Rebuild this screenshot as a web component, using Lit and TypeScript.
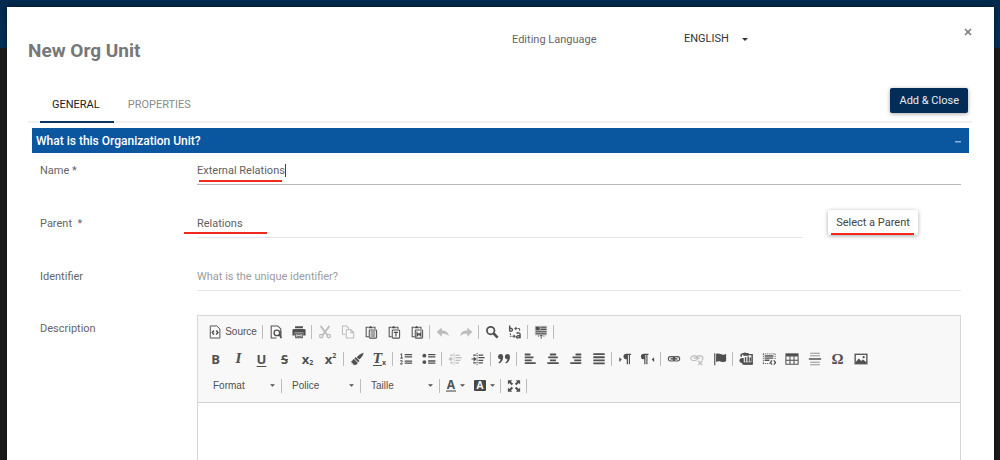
import { LitElement, html, css, svg, nothing, TemplateResult } from "lit";
import { customElement, property } from "lit/decorators.js";
import { classMap } from "lit/directives/class-map.js";

type Tool = { id: string; label: string; off?: boolean } | "|";

const t = (id: string, label: string, off = false): Tool => ({ id, label, off });

const clipboard = svg`<path d="M4.500 2.500h-2v11h3M10.500 2.500h2v2" fill="none" stroke="currentColor" stroke-width="1.200"/>
  <path d="M5 3.800V2h1.500a1 1 0 0 1 2 0H10v1.800z"/>
  <rect x="6" y="5.600" width="8.400" height="9.400" rx="1" fill="none" stroke="currentColor" stroke-width="1.200"/>`;

const ICONS: Record<string, TemplateResult> = {
  source: svg`<path d="M2.600 1.100h7.400l3.600 3.400v10.400H2.600z" fill="none" stroke="currentColor" stroke-width="1.100"/>
    <path d="M6.800 6.300 4.900 8.600 6.800 10.900M9.400 6.300l1.900 2.300-1.900 2.300" fill="none" stroke="currentColor" stroke-width="1.700"/>`,
  preview: svg`<path d="M13.500 6V4.500L10 1.100H2.500v13.800h6" fill="none" stroke="currentColor" stroke-width="1.200"/>
    <circle cx="9" cy="9" r="3.200" fill="none" stroke="currentColor" stroke-width="1.500"/>
    <path d="m11.200 11.200 3.300 3.500M13.500 6v9" fill="none" stroke="currentColor" stroke-width="1.600"/>`,
  print: svg`<path d="M3.500 1.500h9v2.300h-9zM2 4.600h12a1.500 1.500 0 0 1 1.500 1.500V12h-2.700V8.500H3.200V12H.5V6.100A1.500 1.500 0 0 1 2 4.600z"/>
    <path d="M4.300 9.400h7.400v5.200H4.300z" fill="none" stroke="currentColor" stroke-width="1.300"/><path d="M5.500 10.500h5v1h-5zM5.500 12.400h5v1h-5z"/>`,
  cut: svg`<path d="M3 1.200 11 12M13 1.200 5 12" fill="none" stroke="currentColor" stroke-width="2.200"/>
    <circle cx="3.700" cy="12.700" r="1.900" fill="none" stroke="currentColor" stroke-width="1.500"/><circle cx="12.300" cy="12.700" r="1.900" fill="none" stroke="currentColor" stroke-width="1.500"/>`,
  copy: svg`<path d="M5 10.500H1.700V1.200h4.600l2.500 2.500v1.500M6 5.500h5.500l3 3v6.300H6zM11.300 5.500v3.200h3.200" fill="none" stroke="currentColor" stroke-width="1.200"/>`,
  paste: svg`${clipboard}<path d="M7.500 7.400h5.400v1.200H7.500zM7.500 9.700h5.400v1.200H7.500zM7.500 12h5.400v1.200H7.500z"/>`,
  pastetext: svg`${clipboard}<path d="M7.800 8.300h4.800M10.200 8.300v4.800" fill="none" stroke="currentColor" stroke-width="1.400"/>`,
  pasteword: svg`${clipboard}<path d="M8 7.500v5.300l2.200-2.300 2.200 2.300V7.500M8 10.200h4.400" fill="none" stroke="currentColor" stroke-width="1.300"/>`,
  undo: svg`<path d="M6.500 2.800v3.500c4.500 0 7.500 1.500 8.200 6.700-2-2.500-4.300-3-8.200-2.900v3.300L.8 8z"/>`,
  redo: svg`<path d="M9.500 2.800v3.500c-4.500 0-7.500 1.500-8.200 6.700 2-2.500 4.300-3 8.200-2.900v3.300L15.200 8z"/>`,
  find: svg`<circle cx="6.500" cy="6.300" r="4.300" fill="none" stroke="currentColor" stroke-width="2"/><path d="m9.800 9.600 4.600 4.800" fill="none" stroke="currentColor" stroke-width="3"/>`,
  replace: svg`<path d="M1.900.5v7M1.900 4.200c3-2 4.500 2.600 1.600 2.900-.8 0-1.600-.5-1.600-1.200" fill="none" stroke="currentColor" stroke-width="1.600"/>
    <path d="M9.800 9.700c1.500-1.500 4-.8 4 .8v4.600M13.800 12c-5-.2-5 2.900-2.700 2.700 1.200 0 2.500-.7 2.700-1.500" fill="none" stroke="currentColor" stroke-width="1.600"/>
    <path d="M2.700 9.500v3.300h4.500M13.300 6.700V4H9" fill="none" stroke="currentColor" stroke-width="1.200" stroke-dasharray="2 .7"/><path d="m6.500 10.500 2.500 2.300-2.500 2.300zM9.500 1.700 7 4l2.500 2.300z"/>`,
  selectall: svg`<path d="M1 1h14v10.800H1z" fill="currentColor" opacity=".35"/><path d="M2 2h4.500v4H2zM7.500 2h6.500v1.200H7.500zM7.500 4.400h6.500v1.200H7.500zM2 7h12v1.200H2zM2 9.400h12v1.200H2zM7 11.500h2.500v1.700H7zM4.500 12h1.400v1H4.500zM10.700 12H12v1h-1.300zM7.500 14h1.500v1.500H7.500z"/>`,
  brush: svg`<path d="M15.700.8c-3.200.8-6.200 2.900-7.900 5.200l2.500 2.600C13 6.600 15 4 15.700.8z"/><path d="m6.600 5.700 4.300 4.500-1.600 1.600L5 7.300zM4.300 7.700l4.700 4.900c-1.200 1.600-2.600 2.500-4.400 2.600l.4-1.300-1.900.6.600-1.700-2.200.4.800-1.700-1.900-.2c1.700-.6 2.700-1.700 3.900-3.600z"/>`,
  ol: svg`<path d="M6.500 3h8.500M6.500 5.500h8.500M6.500 10.300h8.500M6.500 12.800h8.500" fill="none" stroke="currentColor" stroke-width="1.400"/><path d="M1.500 2.800 3 2v5M1.300 7h3.200M1.300 10h2.300v1.700l-2.100 2h2.800" fill="none" stroke="currentColor" stroke-width="1.100"/>`,
  ul: svg`<circle cx="2.700" cy="4.200" r="2.200"/><circle cx="2.700" cy="11.500" r="2.200"/><path d="M7 3h8.300M7 5.500h8.300M7 10.300h8.300M7 12.800h8.300" fill="none" stroke="currentColor" stroke-width="1.500"/>`,
  outdent: svg`<path d="M7 1v14" stroke="currentColor" stroke-width="1" stroke-dasharray="1.500 1"/><path d="M8.500 3.500h5M8.500 6.500h7M8.500 9.500H14M8.500 12.500h4M2 8h4M2.500 3.500h3.500M2.500 12.500h3.500" stroke="currentColor" stroke-width="1.300"/><path d="M4 5v6L.6 8z"/>`,
  indent: svg`<path d="M7 1v14" stroke="currentColor" stroke-width="1" stroke-dasharray="1.500 1"/><path d="M8.500 3.500H14M8.500 6.500h7M8.500 9.500H14M8.500 12.500h5M.6 8h3M2.500 3.500h3.500M2.500 12.500h3.500" stroke="currentColor" stroke-width="1.300"/><path d="M3 5v6l3.500-3z"/>`,
  quote: svg`<path d="M1.200 5.300a2.900 2.900 0 0 1 5.800-.3c.2 4-1.600 6.500-4.600 8.200l-.7-1.200c1.600-1.200 2.300-2.500 2.400-3.800-1.800.1-2.900-1.200-2.900-2.900zM9 5.300a2.900 2.900 0 0 1 5.800-.3c.2 4-1.600 6.500-4.600 8.200L9.500 12c1.600-1.200 2.300-2.500 2.400-3.800C10.100 8.300 9 7 9 5.300z"/>`,
  left: svg`<path d="M2 2.900h6.500M2 6.200h10M2 9.500h8M2 12.800h12.500" stroke="currentColor" stroke-width="2.100"/>`,
  center: svg`<path d="M4.500 2.900h7M2.500 6.200h11M4.500 9.500h7M1.500 12.800h13" stroke="currentColor" stroke-width="2.100"/>`,
  right: svg`<path d="M7.500 2.900H14M4 6.200h10M6 9.500h8M1.500 12.800H14" stroke="currentColor" stroke-width="2.100"/>`,
  justify: svg`<path d="M1.500 2.500h13M1.500 6h13M1.500 9.500h13M1.500 13h13" stroke="currentColor" stroke-width="2.100"/>`,
  ltr: svg`<path d="m1.500 6 2.800 2.700-2.800 2.700z"/><path d="M15 2H9.500a3.200 3.200 0 0 0 0 6.400h.5V14h1.400V3.400h1V14h1.300V3.400H15z"/>`,
  rtl: svg`<path d="m15 6-2.800 2.700L15 11.400z"/><path d="M8.500 2H3a3.200 3.200 0 0 0 0 6.400h.7V14h1.400V3.400h1V14h1.300V3.400h1.100z"/>`,
  link: svg`<rect x="1.500" y="5.300" width="7.500" height="5" rx="2.500" fill="none" stroke="currentColor" stroke-width="1.200"/><rect x="7" y="5.300" width="7.500" height="5" rx="2.500" fill="none" stroke="currentColor" stroke-width="1.200"/><path d="M4 7.800h8" stroke="currentColor" stroke-width="1.600"/>`,
  unlink: svg`<rect x="1" y="4.500" width="7.500" height="5.200" rx="2.600" fill="none" stroke="currentColor" stroke-width="1.300"/><path d="M7.500 7a2.600 2.600 0 0 1 2.600-2.500H12A2.600 2.600 0 0 1 14.700 7c0 1-.3 1.700-.8 2.200M4 7h7.500M9.500 10l4.500 5M14 10l-4.500 5" fill="none" stroke="currentColor" stroke-width="1.400"/>`,
  flag: svg`<path d="M2 1.500v13.500" stroke="currentColor" stroke-width="1.300"/><path d="M3.500 2.300c2-1.300 4 0 5.700.4 2 .5 4 .4 5.800-.4v8.400c-2 1-4.200.8-5.800.3-1.900-.6-3.700-.7-5.700.3z"/>`,
  media: svg`<path d="M2.500 5.500V3l4-1.500V3M5.500 3H15v10.500H4.500V7.200" fill="none" stroke="currentColor" stroke-width="1.700"/><path d="M.5 9.800c0-1.600 1.300-2.800 3-2.900h1.400v5.600H3.300c-1.600 0-2.800-1-2.800-2.700z"/><path d="M5 1h6v3.200H5zM5 11.800h10.500v2.700H5z"/><path d="M7.500 6v5M10.500 5v6M13 6.300v4.500" stroke="currentColor" stroke-width="1.700"/>`,
  div: svg`<path d="M1.500 2v11" stroke="currentColor" stroke-width="1" stroke-dasharray="1.400 1"/><path d="M1 2.200h14M15 2v6M1 13.200h8" fill="none" stroke="currentColor" stroke-width="1" stroke-dasharray="1.400 1"/><path d="M3 4.500h10M3 7h10M3 9.500h5.500" stroke="currentColor" stroke-width="1.600"/><path d="m11.500 9.500-2 2.500 2 2.500M13.500 9.500l2 2.500-2 2.500" fill="none" stroke="currentColor" stroke-width="1.400"/>`,
  table: svg`<path d="M.5 1.500h15v3.700H.5z"/><path d="M1 5v9h14V5M1 9.500h14M5.700 5v9M10.300 5v9" fill="none" stroke="currentColor" stroke-width="1.200"/>`,
  hr: svg`<path d="M1 8h14" stroke="currentColor" stroke-width="1.700"/><path d="M2.500 1.500h11M2.500 4.200h11M2.500 11.800h11M2.500 14.500h11" stroke="currentColor" stroke-width="1.200" opacity=".6"/>`,
  image: svg`<rect x="1.300" y="2.600" width="13.400" height="10.800" fill="none" stroke="currentColor" stroke-width="1.500"/><path d="m2 11.500 3.500-4 2.700 2.700 2-1.500 4 3V13H2z"/><circle cx="11" cy="5.900" r="1.300"/>`,
  maximize: svg`<path d="M1 1.500h5L4.500 3 7 5.500 5.300 7.200 2.600 4.600 1 6.200zM15 1.500v4.700l-1.600-1.600-2.700 2.600L9 5.500 11.500 3 10 1.500zM1 14.500V9.800l1.600 1.600 2.700-2.600L7 10.500 4.500 13 6 14.500zM15 14.500h-5l1.500-1.500L9 10.500l1.700-1.700 2.700 2.600L15 9.800z"/>`,
};

const GLYPHS: Record<string, TemplateResult> = {
  bold: html`<span class="g">B</span>`,
  italic: html`<span class="g serif">I</span>`,
  underline: html`<span class="g under">U</span>`,
  strike: html`<span class="g strike">S</span>`,
  sub: html`<span class="g">x</span><span class="small low">2</span>`,
  sup: html`<span class="g">x</span><span class="small high">2</span>`,
  clear: html`<span class="g serif under">T</span><span class="small low">x</span>`,
  omega: html`<span class="omega">Ω</span>`,
};

const ROW_ONE: Tool[] = [
  t("source", "Source"), "|",
  t("preview", "Preview"), t("print", "Print"), "|",
  t("cut", "Cut", true), t("copy", "Copy", true), t("paste", "Paste"),
  t("pastetext", "Paste as plain text"), t("pasteword", "Paste from Word"), "|",
  t("undo", "Undo", true), t("redo", "Redo", true), "|",
  t("find", "Find"), t("replace", "Replace"), "|",
  t("selectall", "Select All"), "|",
];

const ROW_TWO: Tool[] = [
  t("bold", "Bold"), t("italic", "Italic"), t("underline", "Underline"), t("strike", "Strikethrough"),
  t("sub", "Subscript"), t("sup", "Superscript"), "|",
  t("brush", "Copy Formatting"), t("clear", "Remove Format"), "|",
  t("ol", "Numbered List"), t("ul", "Bulleted List"), "|",
  t("outdent", "Decrease Indent", true), t("indent", "Increase Indent"), "|",
  t("quote", "Block Quote"), "|",
  t("left", "Align Left"), t("center", "Center"), t("right", "Align Right"), t("justify", "Justify"), "|",
  t("ltr", "Text direction left to right"), t("rtl", "Text direction right to left"), "|",
  t("link", "Link"), t("unlink", "Unlink", true), t("flag", "Anchor"), "|",
  t("media", "Media"), t("div", "Div Container"), t("table", "Table"), t("hr", "Horizontal Line"),
  t("omega", "Special Character"), t("image", "Image"),
];

const caret = html`<svg class="caret" viewBox="0 0 6 3" aria-hidden="true"><path d="M0 0h6L3 3z" fill="currentColor"/></svg>`;

@customElement("rich-editor")
export class RichEditor extends LitElement {
  @property() name = "";

  static styles = css`
    :host {
      display: flex;
      flex-direction: column;
      border: 1px solid #d6d6d6;
      height: 240px;
      box-sizing: border-box;
      color: #505050;
      font-family: "Liberation Sans", Arial, sans-serif;
    }
    .toolbar {
      display: flex;
      flex-direction: column;
      gap: 4px;
      padding: 4px 6px 5px;
      background: #f8f8f8;
      border-bottom: 1px solid #d1d1d1;
    }
    .row {
      display: flex;
      align-items: center;
      height: 23px;
    }
    button {
      display: flex;
      align-items: center;
      justify-content: center;
      width: 23px;
      height: 23px;
      padding: 0;
      border: 0;
      background: none;
      color: inherit;
      font: inherit;
    }
    button:disabled { opacity: 0.35; }
    button.wide {
      width: 57px;
      gap: 3px;
      font-size: 10px;
    }
    button.color {
      width: 29px;
      gap: 4px;
    }
    .icon { width: 14px; height: 14px; flex: none; }
    .sep {
      width: 1px;
      height: 14px;
      margin: 0 1px;
      background: #bcbcbc;
      flex: none;
    }
    .g { font: bold 13px/16px "Open Sans", sans-serif; }
    .serif { font-family: "DejaVu Serif", serif; font-style: italic; font-size: 12px; }
    .under { text-decoration: underline; text-decoration-thickness: 1px; text-underline-offset: 2px; }
    .strike { text-decoration: line-through; }
    .small { font: bold 7px/8px "Open Sans", sans-serif; }
    .low { align-self: flex-end; padding-bottom: 3px; }
    .high { align-self: flex-start; padding-top: 5px; }
    .omega { font: bold 15px/16px "Liberation Serif", serif; }
    .caret { width: 5px; height: 3px; flex: none; }
    .combo {
      display: grid;
      grid-template-columns: 1fr;
      align-items: center;
      width: 76px;
    }
    .combo > * { grid-area: 1 / 1; }
    .combo .caret { justify-self: end; margin-right: 5px; pointer-events: none; }
    select {
      appearance: none;
      width: 100%;
      height: 23px;
      padding: 0 14px 0 9px;
      border: 0;
      background: none;
      color: inherit;
      font: 10px "Liberation Sans", Arial, sans-serif;
    }
    .ink {
      font: bold 12px/11px "Open Sans", sans-serif;
      border-bottom: 2px solid #9a9a9a;
      padding: 0 1px;
    }
    .paint {
      font: bold 10px/11px "Open Sans", sans-serif;
      background: #474747;
      color: #f8f8f8;
      border-radius: 1px;
      width: 12px;
      text-align: center;
    }
    textarea {
      flex: 1;
      border: 0;
      padding: 12px;
      resize: none;
      outline: none;
      background: #fff;
    }
  `;

  private tool(item: Tool) {
    if (item === "|") return html`<span class="sep"></span>`;
    const wide = item.id === "source";
    return html`<button type="button" class=${classMap({ wide })} ?disabled=${item.off} aria-label=${item.label}>
      ${GLYPHS[item.id] ?? html`<svg class="icon" viewBox="0 0 16 16" fill="currentColor" aria-hidden="true">${ICONS[item.id]}</svg>`}
      ${wide ? html`<span>${item.label}</span>` : nothing}
    </button>`;
  }

  private combo(label: string) {
    return html`<span class="combo"><select aria-label=${label}><option>${label}</option></select>${caret}</span>
      <span class="sep"></span>`;
  }

  render() {
    return html`
      <div class="toolbar" role="toolbar" aria-label="Editor">
        <div class="row">${ROW_ONE.map((i) => this.tool(i))}</div>
        <div class="row">${ROW_TWO.map((i) => this.tool(i))}</div>
        <div class="row">
          ${["Format", "Police", "Taille"].map((l) => this.combo(l))}
          <button type="button" class="color" aria-label="Text Color"><span class="ink">A</span>${caret}</button>
          <button type="button" class="color" aria-label="Background Color"><span class="paint">A</span>${caret}</button>
          <span class="sep"></span>
          ${this.tool(t("maximize", "Maximize"))}
          <span class="sep"></span>
        </div>
      </div>
      <textarea aria-label=${this.name}></textarea>
    `;
  }
}

@customElement("app-root")
export class AppRoot extends LitElement {
  static styles = css`
    :host {
      display: block;
      height: 100vh;
      overflow: hidden;
      box-sizing: border-box;
      padding: 7px 6px 0 7px;
      background: linear-gradient(#022a4f, #03305a 48px, #1b1b1b 48px);
      font-family: Roboto, sans-serif;
      font-size: 11px;
      color: #666;
    }
    .dialog {
      min-height: 100%;
      box-sizing: border-box;
      padding: 0 22px 0 21px;
      background: #fff;
      box-shadow: 0 0 6px rgba(0, 0, 0, 0.5);
    }
    header {
      display: grid;
      grid-template-columns: 484fr 172fr 288fr;
      padding-top: 18px;
      height: 54px;
      line-height: 14px;
    }
    h1 {
      margin: 0;
      padding-top: 14px;
      font-size: 19px;
      line-height: 24px;
      font-weight: 700;
      color: #777;
    }
    .lang-label { padding-top: 8px; }
    .lang-side {
      display: flex;
      justify-content: space-between;
      align-items: flex-start;
    }
    .lang {
      display: grid;
      align-items: center;
      width: 65px;
      padding-top: 7px;
      color: #333;
    }
    .lang > * { grid-area: 1 / 1; }
    .lang select {
      appearance: none;
      width: 100%;
      height: 14px;
      padding: 0;
      border: 0;
      background: none;
      color: inherit;
      font: 11px/14px Roboto, sans-serif;
    }
    .caret {
      justify-self: end;
      width: 6px;
      height: 3px;
      margin-right: 1px;
      pointer-events: none;
    }
    .close {
      display: flex;
      padding: 3px 0;
      border: 0;
      background: none;
      color: #757575;
    }
    .close svg { width: 8px; height: 8px; }
    .bar {
      display: flex;
      align-items: flex-start;
      justify-content: space-between;
      height: 42px;
      padding: 0 4px 0 12px;
      border-bottom: 2px solid #f0f0f0;
    }
    .tabs { display: flex; gap: 2px; }
    .tab {
      height: 44px;
      padding: 9px 14px 0 12px;
      border: 0;
      border-bottom: 2px solid transparent;
      background: none;
      color: #8a8a8a;
      font: 11px/18px Roboto, sans-serif;
    }
    .tab.active { color: #212121; border-color: #0a3560; }
    .solid, .raised {
      border: 0;
      border-radius: 2px;
      font: 11px/14px Roboto, sans-serif;
      white-space: nowrap;
    }
    .solid {
      margin-top: 9px;
      height: 25px;
      padding: 0 9px;
      background: #032d57;
      color: #e8edf2;
      box-shadow: 0 1px 4px rgba(0, 0, 0, 0.35);
    }
    .panel {
      display: flex;
      align-items: center;
      justify-content: space-between;
      height: 25px;
      margin: 5px 3px 0 4px;
      padding: 0 8px 0 4px;
      background: #0b579f;
      color: #fff;
    }
    h2 { margin: 0; font-size: 12px; line-height: 16px; font-weight: 500; }
    .fold { display: flex; padding: 0; border: 0; background: none; }
    .fold svg { width: 6px; height: 8px; }
    form {
      display: flex;
      flex-direction: column;
      padding: 4px 11px 0 12px;
    }
    .field {
      display: grid;
      grid-template-columns: 157px 1fr;
      margin-bottom: 25px;
    }
    .field.before-editor { margin-bottom: 24px; }
    .field > label { line-height: 14px; padding-top: 7px; white-space: pre; }
    .with-action { display: grid; grid-template-columns: 1fr 133px; gap: 25px; }
    .box { position: relative; height: 28px; }
    input {
      width: 100%;
      height: 28px;
      box-sizing: border-box;
      padding: 0;
      border: 0;
      border-bottom: 1px solid #e4e4e4;
      outline: none;
      background: none;
      color: #616161;
      font: 11px/14px Roboto, sans-serif;
    }
    input.focused { border-color: #b8b8b8; }
    input::placeholder { color: #9c9c9c; opacity: 1; }
    .cursor {
      position: absolute;
      left: 88px;
      top: 7px;
      width: 1px;
      height: 13px;
      background: #444;
    }
    .raised {
      position: relative;
      justify-self: start;
      width: 90px;
      height: 25px;
      padding: 0;
      background: #fff;
      color: #444;
      box-shadow: 0 1px 4px rgba(0, 0, 0, 0.35);
    }
    .mark::after {
      content: "";
      position: absolute;
      width: 83px;
      height: 2px;
      background: #f0281e;
    }
    .mark.name::after { left: 2px; top: 23px; }
    .mark.parent::after { left: -13px; top: 22px; }
    .raised.mark::after { left: 3px; bottom: 0; }
  `;

  render() {
    return html`
      <div class="dialog" role="dialog" aria-labelledby="title">
        <header>
          <h1 id="title">New Org Unit</h1>
          <label class="lang-label" for="lang">Editing Language</label>
          <div class="lang-side">
            <span class="lang"><select id="lang"><option>ENGLISH</option></select>${caret}</span>
            <button type="button" class="close" aria-label="Close">
              <svg viewBox="0 0 8 8" aria-hidden="true"><path d="m1 1 6 6M7 1 1 7" stroke="currentColor" stroke-width="1.500"/></svg>
            </button>
          </div>
        </header>
        <div class="bar">
          <div class="tabs" role="tablist">
            <button type="button" class="tab active" role="tab" aria-selected="true">GENERAL</button>
            <button type="button" class="tab" role="tab" aria-selected="false">PROPERTIES</button>
          </div>
          <button type="button" class="solid">Add &amp; Close</button>
        </div>
        <div class="panel">
          <h2>What is this Organization Unit?</h2>
          <button type="button" class="fold" aria-label="Collapse">
            <svg viewBox="0 0 6 8" aria-hidden="true"><path d="M0 4h6v1.500H0z" fill="#8fb4d9"/></svg>
          </button>
        </div>
        <form>
          <div class="field">
            <label for="name">Name *</label>
            <span class="box mark name"><input id="name" class="focused" .value=${"External Relations"} /><span class="cursor"></span></span>
          </div>
          <div class="field">
            <label for="parent">Parent  *</label>
            <div class="with-action">
              <span class="box mark parent"><input id="parent" .value=${"Relations"} /></span>
              <button type="button" class="raised mark">Select a Parent</button>
            </div>
          </div>
          <div class="field before-editor">
            <label for="identifier">Identifier</label>
            <span class="box"><input id="identifier" placeholder="What is the unique identifier?" /></span>
          </div>
          <div class="field">
            <label>Description</label>
            <rich-editor name="Description"></rich-editor>
          </div>
        </form>
      </div>
    `;
  }
}
